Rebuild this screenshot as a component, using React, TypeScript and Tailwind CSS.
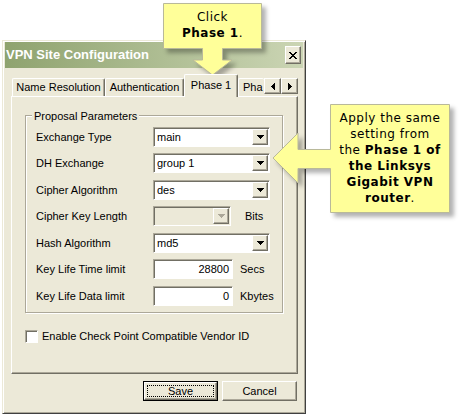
const raised =
  "border border-t-white border-l-white border-r-[#716f64] border-b-[#716f64] shadow-[inset_-1px_-1px_0_#aca899]";
const sunken =
  "border border-t-[#aca899] border-l-[#aca899] border-r-white border-b-white shadow-[inset_1px_1px_0_#716f64]";

type Row = {
  label: string;
  kind: "select" | "disabled" | "input";
  value?: string;
  unit?: string;
  mt: string;
};

const rows: Row[] = [
  { label: "Exchange Type", kind: "select", value: "main", mt: "mt-0" },
  { label: "DH Exchange", kind: "select", value: "group 1", mt: "mt-[6px]" },
  { label: "Cipher Algorithm", kind: "select", value: "des", mt: "mt-[7px]" },
  { label: "Cipher Key Length", kind: "disabled", unit: "Bits", mt: "mt-[6px]" },
  { label: "Hash Algorithm", kind: "select", value: "md5", mt: "mt-[7px]" },
  { label: "Key Life Time limit", kind: "input", value: "28800", unit: "Secs", mt: "mt-[6px]" },
  { label: "Key Life Data limit", kind: "input", value: "0", unit: "Kbytes", mt: "mt-[7px]" },
];

function DownArrow({ color = "#000" }: { color?: string }) {
  return (
    <svg width="7" height="4" viewBox="0 0 7 4" shapeRendering="crispEdges">
      <path d="M0 0H7V1H6V2H5V3H4V4H3V3H2V2H1V1H0Z" fill={color} />
    </svg>
  );
}

function SideArrow({ dir }: { dir: "left" | "right" }) {
  const d =
    dir === "left"
      ? "M0 3H1V2H2V1H3V0H4V7H3V6H2V5H1V4H0Z"
      : "M0 0H1V1H2V2H3V3H4V4H3V5H2V6H1V7H0Z";
  return (
    <svg width="4" height="7" viewBox="0 0 4 7" shapeRendering="crispEdges">
      <path d={d} fill="#000" />
    </svg>
  );
}

function Field({ row }: { row: Row }) {
  if (row.kind === "input") {
    return (
      <div className={`flex h-[20px] w-[80px] items-center justify-end bg-white pr-[3px] ${sunken}`}>
        {row.value}
      </div>
    );
  }
  const disabled = row.kind === "disabled";
  return (
    <div
      className={`flex h-[20px] items-center p-[1px] ${sunken} ${
        disabled ? "w-[78px] bg-[#ece9d8]" : "w-[117px] bg-white"
      }`}
    >
      <span className="flex-1 pl-[2px]">{row.value}</span>
      <div className={`flex h-[16px] w-[16px] items-center justify-center bg-[#ece9d8] ${raised}`}>
        <DownArrow color={disabled ? "#aca899" : "#000"} />
      </div>
    </div>
  );
}

function Tab({ w, children, last }: { w: string; children: string; last?: boolean }) {
  return (
    <div
      className={`flex h-[18px] items-center whitespace-nowrap rounded-t-[2px] border-t border-l border-t-white border-l-white ${
        last
          ? "justify-start pl-[4px]"
          : "justify-center border-r border-r-[#716f64] shadow-[inset_-1px_0_0_#aca899]"
      } ${w}`}
    >
      {children}
    </div>
  );
}

export default function App() {
  return (
    <div className="relative h-[417px] w-[460px] overflow-hidden bg-white pl-[2px] pt-[40px] font-['Liberation_Sans',Arial,sans-serif] text-[11px] text-black">
      {/* Dialog window */}
      <div className="h-[374px] w-[304px] border border-t-[#ece9d8] border-l-[#ece9d8] border-r-[#404040] border-b-[#404040] bg-[#ece9d8] px-[2px] pt-[1px] shadow-[inset_1px_1px_0_#fff,inset_-1px_-1px_0_#aca899]">
        {/* Title bar */}
        <div className="flex h-[26px] items-center justify-between bg-linear-to-r from-[#8fa36f] to-[#cbd5b4] pl-[1px] pr-[2px]">
          <span className="text-[13px] font-bold text-white">VPN Site Configuration</span>
          <div className={`flex h-[18px] w-[16px] items-center justify-center bg-[#ece9d8] ${raised}`}>
            <svg width="8" height="7" viewBox="0 0 8 7" shapeRendering="crispEdges">
              <path
                d="M0 0H2V1H3V2H5V1H6V0H8V1H7V2H6V3H5V4H6V5H7V6H8V7H6V6H5V5H3V6H2V7H0V6H1V5H2V4H3V3H2V2H1V1H0Z"
                fill="#000"
              />
            </svg>
          </div>
        </div>

        {/* Tabs */}
        <div className="ml-[7px] mt-[6px] flex h-[22px] w-[286px] items-end">
          <div className="flex h-full flex-1 items-end">
            <Tab w="w-[93px]">Name Resolution</Tab>
            <Tab w="w-[79px]">Authentication</Tab>
            <div className="relative z-10 -mb-[1px] flex h-[23px] w-[54px] items-center justify-center rounded-t-[2px] border-t border-l border-r border-t-white border-l-white border-r-[#716f64] bg-[#ece9d8] pb-[2px] shadow-[inset_-1px_0_0_#aca899]">
              Phase 1
            </div>
            <Tab w="w-[26px]" last>
              Pha
            </Tab>
          </div>
          <div className="mb-[2px] flex self-start pt-[4px]">
            <div className={`flex h-[16px] w-[17px] items-center justify-center bg-[#ece9d8] ${raised}`}>
              <SideArrow dir="left" />
            </div>
            <div className={`flex h-[16px] w-[17px] items-center justify-center bg-[#ece9d8] ${raised}`}>
              <SideArrow dir="right" />
            </div>
          </div>
        </div>

        {/* Tab panel */}
        <div className={`ml-[6px] h-[278px] w-[287px] ${raised}`}>
          <div className="relative ml-[13px] mt-[18px] h-[198px] w-[258px] border border-[#aca899] pl-[10px] pt-[11px] shadow-[inset_1px_1px_0_#fff,1px_1px_0_#fff]">
            <span className="absolute -top-[8px] left-[6px] bg-[#ece9d8] px-[2px]">Proposal Parameters</span>
            {rows.map((row) => (
              <div key={row.label} className={`flex h-[20px] items-center ${row.mt}`}>
                <span className="w-[117px]">{row.label}</span>
                <Field row={row} />
                {row.unit && (
                  <span className={row.kind === "disabled" ? "ml-[14px]" : "ml-[7px]"}>{row.unit}</span>
                )}
              </div>
            ))}
          </div>
          <div className="ml-[13px] mt-[15px] flex items-center">
            <div className={`h-[13px] w-[13px] bg-white ${sunken}`} />
            <span className="ml-[4px]">Enable Check Point Compatible Vendor ID</span>
          </div>
        </div>

        {/* Buttons */}
        <div className="ml-[6px] mt-[7px] flex w-[287px] justify-end gap-[4px] pr-[1px]">
          <div className="flex h-[20px] w-[75px] border border-black">
            <div className={`relative flex flex-1 items-center justify-center bg-[#ece9d8] ${raised}`}>
              Save
              <div className="absolute inset-[2px] border border-dotted border-black" />
            </div>
          </div>
          <div className={`flex h-[20px] w-[75px] items-center justify-center bg-[#ece9d8] ${raised}`}>Cancel</div>
        </div>
      </div>

      {/* Callout shapes */}
      <svg
        className="pointer-events-none absolute left-0 top-0 drop-shadow-[4px_4px_2px_rgba(0,0,0,0.3)]"
        width="460"
        height="417"
        viewBox="0 0 460 417"
      >
        <path
          d="M163.5 3.5H261.5V48.5H222.5V60H232L212.5 75L193 60H202.5V48.5H163.5Z"
          fill="#ffff99"
          stroke="#b9b99a"
        />
        <path
          d="M330.5 104.5H449.5V212.5H330.5V168.5H298V183L273 158L298 133V149.5H330.5Z"
          fill="#ffff99"
          stroke="#b9b99a"
        />
      </svg>

      {/* Callout texts */}
      <div className="absolute left-[163px] top-[9px] w-[99px] text-center font-['DejaVu_Sans',Verdana,sans-serif] text-[12px] leading-[16px] tracking-[0.5px]">
        Click
        <br />
        <b>Phase 1</b>.
      </div>
      <div className="absolute left-[330px] top-[110px] w-[120px] text-center font-['DejaVu_Sans',Verdana,sans-serif] text-[12px] leading-[16px] tracking-[0.5px]">
        Apply the same
        <br />
        setting from
        <br />
        the <b>Phase 1 of</b>
        <br />
        <b>the Linksys</b>
        <br />
        <b>Gigabit VPN</b>
        <br />
        <b>router</b>.
      </div>
    </div>
  );
}
